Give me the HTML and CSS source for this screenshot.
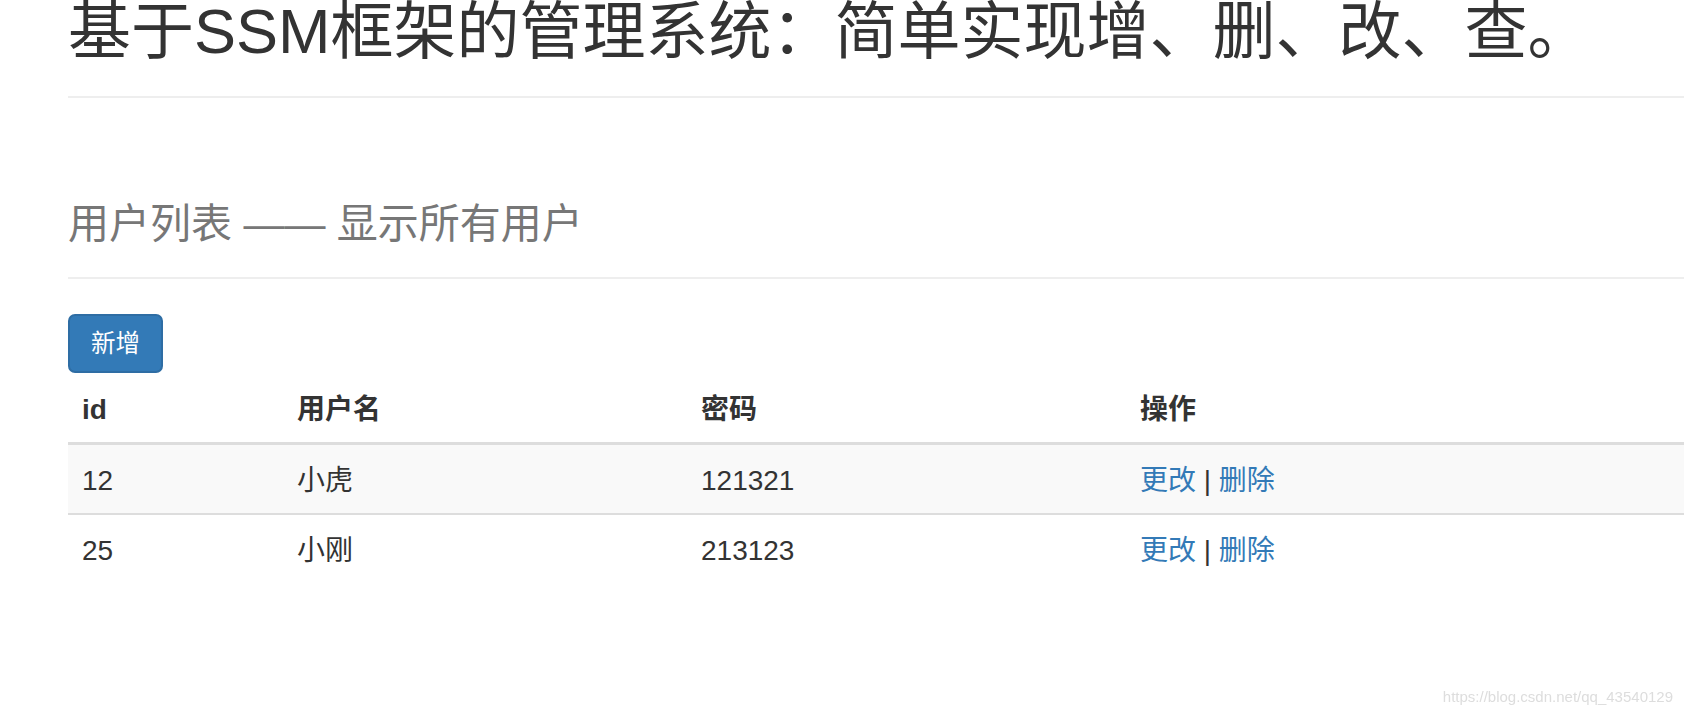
FILE: index.html
```html
<!doctype html>
<html lang="zh-CN">
  <head>
    <meta charset="UTF-8">
    <meta content="width=device-width, initial-scale=1.0" name="viewport">
    <title>用户列表</title>
    <link rel="stylesheet" href="styles.css">
  </head>
  <body>
    <main class="container">
      <div class="page-header">
        <h1>基于SSM框架的管理系统：简单实现增、删、改、查。</h1>
      </div>
      <div class="page-header sub-header">
        <h3>用户列表 —— 显示所有用户</h3>
      </div>
      <div class="toolbar">
        <a class="btn btn-primary" href="#">新增</a>
      </div>
      <table class="table table-striped">
        <colgroup>
          <col class="col-id">
          <col class="col-name">
          <col class="col-password">
          <col>
        </colgroup>
        <thead>
          <tr>
            <th>id</th>
            <th>用户名</th>
            <th>密码</th>
            <th>操作</th>
          </tr>
        </thead>
        <tbody>
          <tr>
            <td>12</td>
            <td>小虎</td>
            <td>121321</td>
            <td><a href="#">更改</a> | <a href="#">删除</a></td>
          </tr>
          <tr>
            <td>25</td>
            <td>小刚</td>
            <td>213123</td>
            <td><a href="#">更改</a> | <a href="#">删除</a></td>
          </tr>
        </tbody>
      </table>
    </main>
    <div class="watermark">https://blog.csdn.net/qq_43540129</div>
  </body>
</html>
```

FILE: styles.css
```css
html {
  -webkit-text-size-adjust: 100%
}
body {
  background-color: #fff;
  color: #333;
  font-family: "Liberation Sans", "Noto Sans CJK SC", sans-serif;
  font-size: 28px;
  line-height: 40px;
  margin: 0;
  overflow: hidden
}
a, a:visited {
  color: #337ab7;
  text-decoration: none
}
.container {
  padding-left: 68px
}
.page-header {
  border-bottom: 2px solid #eee;
  padding-bottom: 30px
}
h1 {
  font-size: 63px;
  font-weight: normal;
  line-height: 69px;
  margin: -3px 0 0
}
.sub-header {
  margin-top: 103px
}
h3 {
  color: #777;
  font-size: 41px;
  font-weight: normal;
  line-height: 46px;
  margin: 0
}
.toolbar {
  display: flex;
  margin-top: 35px
}
.btn {
  border: 2px solid transparent;
  border-radius: 7px;
  display: inline-block;
  font-size: 24.5px;
  line-height: 35px;
  padding: 10px 21px
}
.btn-primary, .btn-primary:visited {
  background-color: #337ab7;
  border-color: #2e6da4;
  color: #fff
}
.table {
  border-collapse: separate;
  border-spacing: 0;
  margin-top: 1px;
  table-layout: fixed;
  width: 100%
}
.col-id {
  width: 215px
}
.col-name {
  width: 404px
}
.col-password {
  width: 439px
}
.table th, .table td {
  padding: 16px 14px 12px;
  text-align: left;
  vertical-align: top
}
.table th {
  border-bottom: 3px solid #ddd;
  font-weight: bold
}
.table tbody tr + tr td {
  border-top: 2px solid #ddd
}
.table-striped tbody tr:nth-child(odd) {
  background-color: #f9f9f9
}
.watermark {
  color: #ddd;
  font-size: 15px;
  line-height: 17px;
  position: fixed;
  right: 11px;
  top: 688px
}
```
